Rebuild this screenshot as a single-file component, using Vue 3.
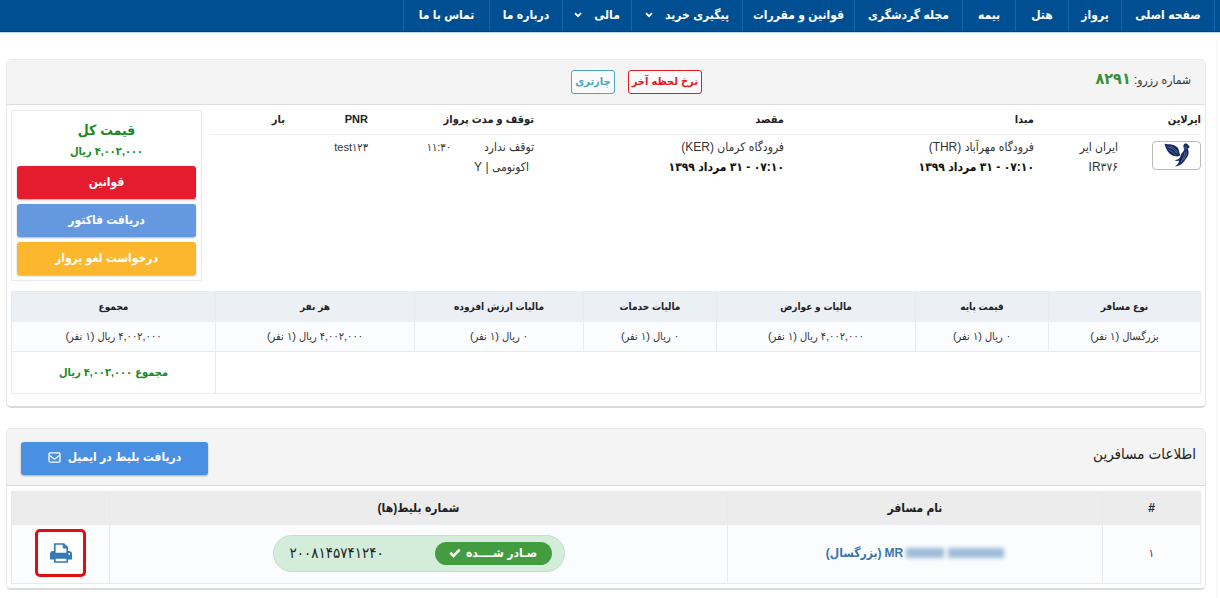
<script setup>
const navItems = [
  { label: 'صفحه اصلی' },
  { label: 'پرواز' },
  { label: 'هتل' },
  { label: 'بیمه' },
  { label: 'مجله گردشگری' },
  { label: 'قوانین و مقررات' },
  { label: 'پیگیری خرید', menu: true },
  { label: 'مالی', menu: true },
  { label: 'درباره ما' },
  { label: 'تماس با ما' },
]

const prices = [
  { title: 'نوع مسافر', value: 'بزرگسال (۱ نفر)' },
  { title: 'قیمت پایه', value: '۰ ریال (۱ نفر)' },
  { title: 'مالیات و عوارض', value: '۴,۰۰۲,۰۰۰ ریال (۱ نفر)' },
  { title: 'مالیات خدمات', value: '۰ ریال (۱ نفر)' },
  { title: 'مالیات ارزش افزوده', value: '۰ ریال (۱ نفر)' },
  { title: 'هر نفر', value: '۴,۰۰۲,۰۰۰ ریال (۱ نفر)' },
  { title: 'مجموع', value: '۴,۰۰۲,۰۰۰ ریال (۱ نفر)' },
]
</script>

<template>
  <div class="page" dir="rtl" lang="fa">
    <nav class="nav">
      <a v-for="item in navItems" :key="item.label" href="#" class="nav-item">
        <span>{{ item.label }}</span>
        <svg v-if="item.menu" class="chevron" viewBox="0 0 8 6" aria-hidden="true">
          <path d="M1 1.2 4 4.2 7 1.2" fill="none" stroke="currentColor" stroke-width="1.8" />
        </svg>
      </a>
    </nav>

    <main class="content">
      <section class="panel">
        <header class="panel-head booking-head">
          <div class="booking">شماره رزرو: <strong>۸۲۹۱</strong></div>
          <div class="tags">
            <span class="tag tag-red">نرخ لحظه آخر</span>
            <span class="tag tag-blue">چارتری</span>
          </div>
        </header>

        <div class="panel-body">
          <div class="flight-row">
            <table class="flight">
              <colgroup>
                <col class="f-logo" /><col class="f-name" /><col class="f-place" /><col class="f-place" />
                <col class="f-stop" /><col class="f-time" /><col class="f-pnr" /><col class="f-bag" />
              </colgroup>
              <thead>
                <tr>
                  <th colspan="2">ایرلاین</th>
                  <th>مبدا</th>
                  <th>مقصد</th>
                  <th colspan="2">توقف و مدت پرواز</th>
                  <th>PNR</th>
                  <th>بار</th>
                </tr>
              </thead>
              <tbody>
                <tr>
                  <td>
                    <span class="logo">
                      <svg viewBox="0 0 75 70" role="img" aria-label="ایران ایر">
                        <path d="M1 2C14 4 30 3 39 13c5 6 5 16 8 23-4 4-10 4-17 2C14 34 6 20 1 2Z" fill="#142a62" />
                        <path d="M56 7c3-7 11-7 14-1l5 6-6 5c4 8 3 18-3 26-8 10-12 22-35 26 9-6 13-12 12-17-5 1-9 0-13-2 10-1 16-4 18-12 2-9 9-11 10-18Z" fill="#142a62" />
                        <path d="M9 11c12 3 21 8 29 20M17 9c10 3 17 9 23 19M12 20c8 3 15 8 22 15M56 50c6-8 9-16 9-26M49 56c5-9 10-16 11-28M57 14l10-3M58 19l9-3" fill="none" stroke="#8b9bc0" stroke-width="1.5" />
                      </svg>
                    </span>
                  </td>
                  <td>ایران ایر<br />IR۳۷۶</td>
                  <td>فرودگاه مهرآباد (THR)<br /><strong>۰۷:۱۰ - ۳۱ مرداد ۱۳۹۹</strong></td>
                  <td>فرودگاه کرمان (KER)<br /><strong>۰۷:۱۰ - ۳۱ مرداد ۱۳۹۹</strong></td>
                  <td>توقف ندارد<br /><span class="cabin">اکونومی | Y</span></td>
                  <td class="small">۱۱:۳۰</td>
                  <td class="small">test۱۲۳</td>
                  <td></td>
                </tr>
              </tbody>
            </table>

            <aside class="total-box">
              <h2>قیمت کل</h2>
              <p>۴,۰۰۲,۰۰۰ ریال</p>
              <button type="button" class="btn btn-red">قوانین</button>
              <button type="button" class="btn btn-blue">دریافت فاکتور</button>
              <button type="button" class="btn btn-amber">درخواست لغو پرواز</button>
            </aside>
          </div>

          <table class="prices">
            <colgroup>
              <col class="p-type" /><col class="p-base" /><col class="p-tax" /><col class="p-base" />
              <col class="p-vat" /><col class="p-tax" /><col class="p-sum" />
            </colgroup>
            <thead>
              <tr><th v-for="p in prices" :key="p.title">{{ p.title }}</th></tr>
            </thead>
            <tbody>
              <tr class="values"><td v-for="p in prices" :key="p.title">{{ p.value }}</td></tr>
              <tr class="sum">
                <td colspan="6"></td>
                <td>مجموع ۴,۰۰۲,۰۰۰ ریال</td>
              </tr>
            </tbody>
          </table>
        </div>
      </section>

      <section class="panel">
        <header class="panel-head passengers-head">
          <h2>اطلاعات مسافرین</h2>
          <button type="button" class="btn btn-mail">
            <span>دریافت بلیط در ایمیل</span>
            <svg viewBox="0 0 14 12" aria-hidden="true">
              <rect x="1" y="1" width="12" height="10" rx="1.2" fill="none" stroke="currentColor" stroke-width="1.4" />
              <path d="m1.5 3.5 4.3 3.6q1.2.9 2.4 0l4.3-3.6" fill="none" stroke="currentColor" stroke-width="1.3" />
            </svg>
          </button>
        </header>

        <div class="panel-body">
          <table class="passengers">
            <colgroup><col class="s-num" /><col class="s-name" /><col class="s-ticket" /><col class="s-print" /></colgroup>
            <thead>
              <tr><th>#</th><th>نام مسافر</th><th>شماره بلیط(ها)</th><th></th></tr>
            </thead>
            <tbody>
              <tr>
                <td>۱</td>
                <td>
                  <a href="#" class="name"><span class="masked"><i></i><i></i></span><span>MR</span><span>(بزرگسال)</span></a>
                </td>
                <td>
                  <div class="ticket">
                    <span class="issued">
                      <span>صـادر شــــده</span>
                      <svg viewBox="0 0 12 10" aria-hidden="true">
                        <path d="m1.3 4.8 3.2 3.1 6.2-6.2" fill="none" stroke="currentColor" stroke-width="2.6" />
                      </svg>
                    </span>
                    <span>۲۰۰۸۱۴۵۷۴۱۲۴۰</span>
                  </div>
                </td>
                <td>
                  <button type="button" class="print" aria-label="چاپ بلیط">
                    <svg viewBox="0 0 22 20" aria-hidden="true">
                      <path d="M3 8h16a3 3 0 0 1 3 3v5.500h-4V14H4v2.500H0V11a3 3 0 0 1 3-3Z" fill="currentColor" />
                      <path d="M4.800 10.500V1h9l3.400 3.400v6.100z" fill="#fff" stroke="currentColor" stroke-width="1.700" />
                      <path d="M13.200 1v4h4" fill="currentColor" stroke="currentColor" stroke-width="1" />
                      <path d="M3.500 10.500h15v3.500h-15z" fill="currentColor" />
                      <circle cx="19.200" cy="11" r=".9" fill="#fff" />
                      <path d="M4.800 14.800h12.400v4.200H4.800z" fill="#fff" stroke="currentColor" stroke-width="1.700" />
                    </svg>
                  </button>
                </td>
              </tr>
            </tbody>
          </table>
        </div>
      </section>
    </main>
  </div>
</template>

<style>
body {
  margin: 0;
  background: #fff;
}
</style>

<style scoped>
* {
  box-sizing: border-box;
}

.page {
  font-family: "Liberation Sans", "DejaVu Sans Condensed", "DejaVu Sans", sans-serif;
  font-size: 11px;
  color: #333;
}

.nav {
  display: grid;
  grid-template-columns: 94px 53px 53px 53px 108px 112px 111px 69px 73px 86px;
  height: 32px;
  padding-right: 5px;
  background: #004f92;
  border-bottom: 1px solid #00407c;
  box-shadow: 0 1px 0 #b9dcf8;
}

.nav-item {
  display: flex;
  align-items: center;
  justify-content: center;
  gap: 12px;
  padding-bottom: 1px;
  border-left: 1px solid #1563ab;
  color: #fff;
  font-size: 12px;
  font-weight: bold;
  line-height: 30px;
  text-decoration: none;
  white-space: nowrap;
}

.nav-item:first-child {
  border-right: 1px solid #1563ab;
}

.chevron {
  width: 8px;
  height: 6px;
}

.content {
  display: flex;
  flex-direction: column;
  gap: 20px;
  margin: 8px 3px 0 0;
  padding: 19px 10px 9px 6px;
  border-right: 1px solid #f6f6f6;
}

.panel {
  border: 1px solid #e9e9e9;
  border-bottom: 2px solid #d9d9d9;
  border-radius: 5px;
}

.panel-head {
  display: grid;
  align-items: center;
  background: #f4f4f4;
  border-bottom: 1px solid #ddd;
}

.panel-body {
  padding: 5px 4px 4px;
}

.booking-head {
  grid-template-columns: 8fr auto 9fr;
  height: 45px;
  padding: 0 14px;
}

.booking {
  font-size: 12px;
  line-height: 24px;
  padding-bottom: 6px;
}

.booking strong {
  color: #398f3c;
  font-size: 16px;
}

.tags {
  display: flex;
  gap: 13px;
}

.tag {
  height: 24px;
  padding: 0 3px;
  border: 1px solid;
  border-radius: 3px;
  background: #fafafa;
  font-size: 11px;
  font-weight: bold;
  line-height: 21px;
  white-space: nowrap;
}

.tag-red {
  color: #e01b22;
}

.tag-blue {
  color: #4ba6c8;
}

.flight-row {
  display: flex;
  align-items: flex-start;
  gap: 9px;
}

table {
  border-collapse: collapse;
  table-layout: fixed;
  width: 100%;
}

.flight {
  flex: 1;
  width: auto;
}

.f-logo,
.f-time,
.f-pnr {
  width: 83px;
}

.f-name {
  width: 84px;
}

.f-place {
  width: 250px;
}

.f-stop {
  width: 83px;
}

.f-bag {
  width: auto;
}

.flight th,
.flight td {
  padding: 0;
  text-align: right;
  vertical-align: top;
  white-space: nowrap;
}

.flight th {
  height: 24px;
  color: #222;
  line-height: 18px;
  border-bottom: 1px solid #eee;
}

.flight td {
  padding-top: 2px;
  font-size: 12px;
  line-height: 20px;
}

.flight td.small {
  font-size: 11px;
}

.flight strong {
  color: #111;
}

.cabin {
  padding-right: 5px;
}

.logo {
  display: flex;
  align-items: center;
  justify-content: center;
  width: 49px;
  height: 29px;
  margin-top: 4px;
  border: 1px solid #bbb;
  border-radius: 4px;
}

.logo svg {
  width: 26px;
  height: 24px;
}

.total-box {
  display: flex;
  flex-direction: column;
  gap: 5px;
  width: 191px;
  padding: 9px 5px 5px;
  border: 1px solid #e7ebee;
  text-align: center;
  color: #1a8a1e;
}

.total-box h2 {
  margin: 0;
  font-size: 14px;
  line-height: 20px;
}

.total-box p {
  margin: 0;
  font-size: 11px;
  font-weight: bold;
  line-height: 16px;
  margin-top: -2px;
  margin-bottom: 2px;
}

.btn {
  height: 33px;
  padding: 0 0 2px;
  border: 0;
  border-radius: 3px;
  box-shadow: 0 1px 2px rgba(0, 0, 0, 0.3);
  color: #fff;
  font: bold 12px "Liberation Sans", "DejaVu Sans Condensed", "DejaVu Sans", sans-serif;
}

.btn-red {
  background: #e51c2e;
}

.btn-blue {
  background: #6599df;
}

.btn-amber {
  background: #fcb72e;
}

.prices {
  margin-top: 10px;
}

.p-type {
  width: 152px;
}

.p-base {
  width: 133px;
}

.p-tax {
  width: 199px;
}

.p-vat {
  width: 169px;
}

.p-sum {
  width: auto;
}

.prices th,
.prices td {
  padding: 0;
  border: 1px solid #e6ebeb;
  text-align: center;
}

.prices th {
  height: 30px;
  background: #ecf0f5;
  border-bottom: 0;
  color: #222;
  font-size: 10px;
}

.values td {
  height: 30px;
  border-top: 0;
  background: #fbfcfe;
}

.prices .sum td {
  height: 42px;
  color: #1a8a1e;
  font-weight: bold;
}

.panel:first-child .panel-body {
  padding-bottom: 12px;
}

.passengers-head {
  grid-template-columns: 1fr auto;
  height: 57px;
  padding: 2px 9px 0 14px;
}

.passengers-head h2 {
  margin: 0;
  padding-bottom: 9px;
  color: #222;
  font-size: 15px;
  font-weight: normal;
}

.btn-mail {
  display: flex;
  align-items: center;
  justify-content: center;
  gap: 7px;
  width: 187px;
  background: #4a90e2;
}

.btn-mail svg {
  width: 13px;
  height: 11px;
}

.s-num {
  width: 98px;
}

.s-name {
  width: 375px;
}

.s-ticket {
  width: 618px;
}

.s-print {
  width: auto;
}

.passengers th,
.passengers td {
  padding: 0;
  border: 1px solid #e9e9ec;
  text-align: center;
}

.passengers th {
  height: 33px;
  background: #ececec;
  color: #222;
  font-size: 12px;
}

.passengers td {
  height: 59px;
  padding-bottom: 2px;
  background: #fbfcfe;
}

.name {
  display: flex;
  align-items: center;
  justify-content: center;
  gap: 3px;
  color: #3a75ab;
  font-size: 12px;
  font-weight: bold;
  text-decoration: none;
}

.masked {
  display: flex;
  gap: 4px;
  width: 98px;
  height: 10px;
  filter: blur(2px);
}

.masked i {
  flex: 3;
  background: #9dbbd9;
}

.masked i:last-child {
  flex: 2;
}

.ticket {
  display: flex;
  align-items: center;
  justify-content: space-between;
  width: 292px;
  height: 37px;
  margin: 0 auto;
  padding: 0 12px 0 16px;
  border: 1px solid #bfe3c8;
  border-radius: 19px;
  background: #d4edda;
  color: #222;
  font-size: 15px;
}

.issued {
  display: flex;
  align-items: center;
  justify-content: center;
  gap: 5px;
  width: 117px;
  height: 23px;
  border-radius: 12px;
  background: #439d40;
  color: #fff;
  font-size: 12px;
  font-weight: bold;
}

.issued svg {
  width: 12px;
  height: 10px;
}

.print {
  display: flex;
  align-items: center;
  justify-content: center;
  width: 51px;
  height: 48px;
  margin: 0 auto;
  padding: 0;
  border: 3px solid #e00d12;
  border-radius: 5px;
  background: #fff;
  color: #337ab7;
}

.print svg {
  width: 22px;
  height: 20px;
}
</style>
